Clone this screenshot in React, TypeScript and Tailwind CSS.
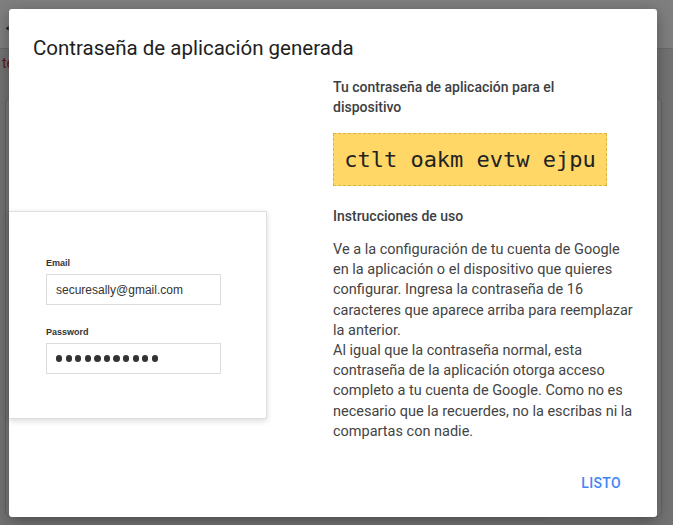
import React from "react"

const roboto = { fontFamily: "Roboto, 'Noto Sans', sans-serif" }

function Background() {
  return (
    <div className="h-[525px] w-[673px] overflow-hidden bg-[#e6e6e6]">
      <header className="flex h-[49px] items-center border-b border-[#d4d4d4] bg-white px-[2px]">
        <span className="text-[18px] font-bold text-[#222]">←</span>
      </header>
      <div className="h-[48px] px-[2px] pt-[4px] text-[14px] text-[#c0392b]">te</div>
      <div className="mx-[5px] h-[420px] w-[657px] rounded-md border border-[#c8c8c8] bg-[#f4f4f4]">
        <div className="flex h-full items-end justify-end px-[24px]">
          <div className="mb-[-6px] rounded bg-[#ececec] px-[16px] py-[4px] text-[13px] font-medium text-[#333]">GENERAR</div>
        </div>
      </div>
    </div>
  )
}

function Field({ label, children }: { label: string; children: React.ReactNode }) {
  return (
    <div className="flex flex-col">
      <span className="text-[9px] font-bold leading-[12px] text-[#333]">{label}</span>
      <div className="mt-[5px] flex h-[31px] w-[175px] items-center border border-[#dcdcdc] bg-white px-[9px] text-[12px] text-[#333]">
        {children}
      </div>
    </div>
  )
}

function LoginCard() {
  return (
    <div
      className="mt-[148px] flex h-[208px] w-[258px] flex-col gap-[21px] border border-l-0 border-[#dedede] bg-white pl-[37px] pt-[45px] shadow-[0_2px_6px_rgba(0,0,0,0.15)]"
      style={{ fontFamily: "'Liberation Sans', Arial, sans-serif" }}
    >
      <Field label="Email">securesally@gmail.com</Field>
      <Field label="Password">
        <span className="flex gap-[3.4px]">
          {Array.from({ length: 11 }).map((_, i) => (
            <span className="h-[6.2px] w-[6.2px] rounded-full bg-[#333]" key={i} />
          ))}
        </span>
      </Field>
    </div>
  )
}

export default function App() {
  return (
    <div className="relative h-[525px] w-[673px] overflow-hidden" style={roboto}>
      <Background />
      <div className="absolute inset-0 bg-black/50" />
      <div className="absolute left-[9px] top-[9px] flex h-[508px] w-[648px] flex-col rounded-[3px] bg-white shadow-[0_4px_16px_rgba(0,0,0,0.35)]">
        <h2 className="px-[24px] pt-[24px] text-[20.5px] leading-[30px] text-[#212121]">Contraseña de aplicación generada</h2>
        <div className="flex flex-1">
          <div className="w-[324px]">
            <LoginCard />
          </div>
          <div className="flex w-[300px] flex-col pt-[14px] text-[#3c4043]">
            <p className="w-[274px] text-[14px] font-medium leading-[20px]">Tu contraseña de aplicación para el dispositivo</p>
            <div className="mt-[16px] flex h-[53px] w-[274px] items-center justify-center border border-dashed border-[#d9b443] bg-[#fed766]">
              <span className="text-[22px] text-[#222]" style={{ fontFamily: "'DejaVu Sans Mono', monospace" }}>
                ctlt oakm evtw ejpu
              </span>
            </div>
            <p className="mt-[20px] text-[14px] font-medium leading-[20px]">Instrucciones de uso</p>
            <p className="mt-[14px] text-[14.5px] leading-[20.2px] text-[#444]">
              Ve a la configuración de tu cuenta de Google en la aplicación o el dispositivo que quieres configurar. Ingresa la contraseña de 16 caracteres que aparece arriba para reemplazar la anterior.
              <br />
              Al igual que la contraseña normal, esta contraseña de la aplicación otorga acceso completo a tu cuenta de Google. Como no es necesario que la recuerdes, no la escribas ni la compartas con nadie.
            </p>
          </div>
        </div>
        <div className="flex justify-end px-[28px] pb-[17px]">
          <button className="px-[8px] py-[6px] text-[14px] font-medium tracking-wide text-[#4285f4]">LISTO</button>
        </div>
      </div>
    </div>
  )
}
